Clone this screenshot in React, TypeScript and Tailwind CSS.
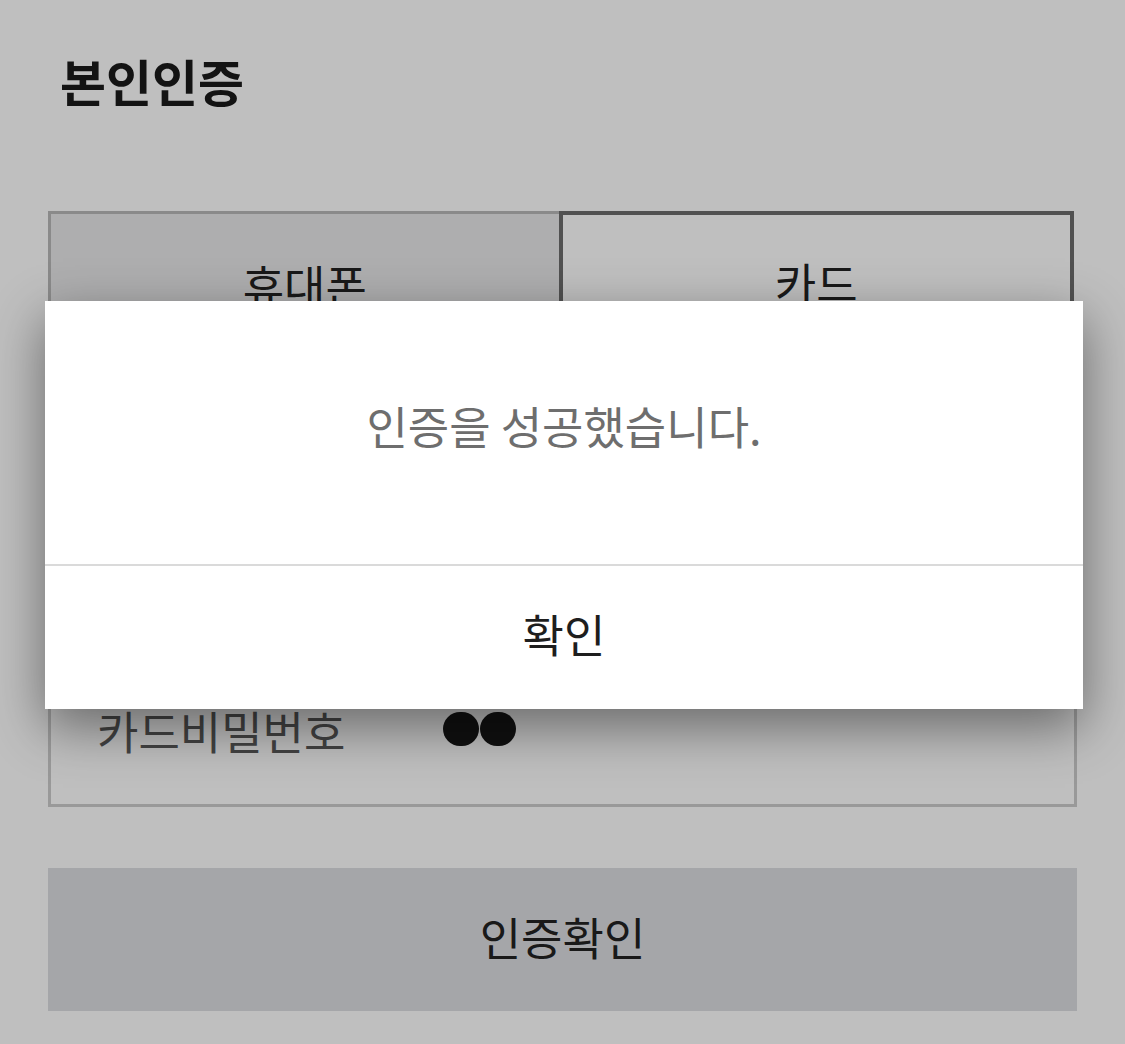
import React from 'react';

const font = { fontFamily: '"Noto Sans CJK KR", "Noto Sans", sans-serif' };

function FieldRow({ label, children, last }: { label: string; children?: React.ReactNode; last?: boolean }) {
  return (
    <div className={`flex items-center h-[140px] px-[46px] ${last ? '' : 'border-b-[3px] border-[#d5d5d5]'}`}>
      <span className="w-[346px] text-[45px] leading-none -mt-[8px] text-[#5a5a5a]">{label}</span>
      <div className="flex items-center">{children}</div>
    </div>
  );
}

export default function App() {
  return (
    <div className="relative w-[1125px] h-[1044px] bg-white overflow-hidden" style={font}>
      {/* page underneath */}
      <div className="px-[48px] pt-[46px]">
        <h1 className="pl-[12px] text-[50px] font-bold leading-[69px] text-[#1a1a1a]">본인인증</h1>

        <div className="mt-[96px] flex h-[144px] w-[1026px]">
          <button className="flex-1 flex items-center justify-center bg-[#e9e9ea] border-t-[3px] border-l-[3px] border-[#b8b8b8] text-[45px] text-[#222]">
            휴대폰
          </button>
          <button className="flex-1 flex items-center justify-center bg-white border-[4px] border-[#6c6c6c] text-[45px] text-[#222]">
            카드
          </button>
        </div>

        <div className="mt-[26px] border-[3px] border-[#cccccc]">
          <FieldRow label="카드번호">
            <span className="text-[45px] text-[#999]">1234-5678-****-****</span>
          </FieldRow>
          <FieldRow label="유효기간">
            <span className="text-[45px] text-[#999]">MM / YY</span>
          </FieldRow>
          <FieldRow label="카드비밀번호" last>
            <span className="flex gap-[1px] -mt-[10px]">
              <span className="block w-[36px] h-[34px] rounded-full bg-[#161616]" />
              <span className="block w-[36px] h-[34px] rounded-full bg-[#161616]" />
            </span>
          </FieldRow>
        </div>

        <button className="mt-[61px] w-[1029px] h-[143px] bg-[#dddee2] text-[45px] text-[#222] flex items-center justify-center">
          <span className="-mt-[6px]">인증확인</span>
        </button>
      </div>

      {/* dim overlay */}
      <div className="absolute inset-0 bg-black/25" />

      {/* alert dialog */}
      <div className="absolute left-[45px] top-[301px] w-[1038px] bg-white shadow-[0_18px_50px_rgba(0,0,0,0.45)]">
        <div className="h-[263px] flex items-center justify-center pb-[14px] text-[45px] text-[#6e6e6e]">
          인증을 성공했습니다.
        </div>
        <div className="h-[2px] bg-[#dadada]" />
        <button className="w-full h-[143px] flex items-center justify-center pb-[8px] text-[45px] text-[#1e1e1e]">
          확인
        </button>
      </div>
    </div>
  );
}
